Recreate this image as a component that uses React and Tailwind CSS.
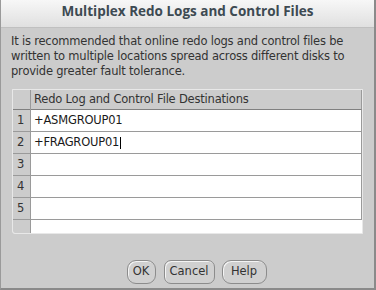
const rows = ['+ASMGROUP01', '+FRAGROUP01', '', '', '']

export default function App() {
  return (
    <div className="w-[376px] h-[290px] bg-[#cccccc] flex flex-col border-l border-r-2 border-b-2 border-l-[#9a9a9a] border-r-[#8a8a8a] border-b-[#8a8a8a] text-[#333333] font-['DejaVu_Sans',sans-serif] overflow-hidden">
      {/* title bar */}
      <div className="h-[28px] shrink-0 bg-gradient-to-b from-[#f7f7f7] to-[#e0e0e0] border-b border-[#c0c0c0] flex justify-center pt-[1px]">
        <span className="text-[13.5px] font-bold leading-[20px] text-[#3d4a52] font-['Open_Sans',sans-serif]">
          Multiplex Redo Logs and Control Files
        </span>
      </div>

      <p className="px-[10px] pt-[6px] text-[11.5px] tracking-[-0.2px] leading-[15px] text-[#333333]">
        It is recommended that online redo logs and control files be written to multiple locations spread across different disks to provide greater fault tolerance.
      </p>

      {/* destinations table */}
      <div className="mt-[10px] ml-[11px] mr-[11px] h-[145px] shrink-0 border border-[#e8e8e8] rounded-bl-[3px] bg-white flex overflow-hidden text-[11.5px] tracking-[-0.2px]">
        <div className="w-[18px] shrink-0 bg-[#cccccc] border-r border-[#9a9a9a] flex flex-col">
          <div className="h-[20px] shrink-0 border-b border-[#808080]" />
          {rows.map((_, i) => (
            <div key={i} className="h-[22px] shrink-0 border-b border-[#9a9a9a] bg-[#cccccc] pl-[4px] leading-[21px]">
              {i + 1}
            </div>
          ))}
        </div>
        <div className="flex-1 flex flex-col">
          <div className="h-[20px] shrink-0 bg-[#cccccc] border-b border-[#808080] border-r border-r-[#9a9a9a] pl-[3px] leading-[19px]">
            Redo Log and Control File Destinations
          </div>
          {rows.map((r, i) => (
            <div key={i} className="h-[22px] shrink-0 border-b border-r border-[#9a9a9a] pl-[3px] leading-[21px] text-[#1a1a1a] flex items-center">
              {r}
              {i === 1 && <span className="inline-block w-px h-[12px] bg-black ml-[1px]" />}
            </div>
          ))}
        </div>
      </div>

      <div className="flex justify-center gap-[7px] pt-[26px] pl-[18px]">
        <button className="h-[24px] w-[29px] rounded-[9px] border border-[#8c8c8c] bg-[#d0d0d0] text-[11.5px] text-[#333333] shadow-[inset_1px_1px_0_#f4f4f4]">OK</button>
        <button className="h-[24px] w-[51px] ml-[1px] rounded-[7px] border border-[#8c8c8c] bg-[#d0d0d0] text-[11.5px] text-[#333333] shadow-[inset_1px_1px_0_#f4f4f4]">Cancel</button>
        <button className="h-[24px] w-[45px] rounded-[9px] border border-[#8c8c8c] bg-[#d0d0d0] text-[11.5px] text-[#333333] shadow-[inset_1px_1px_0_#f4f4f4]">Help</button>
      </div>
    </div>
  )
}
